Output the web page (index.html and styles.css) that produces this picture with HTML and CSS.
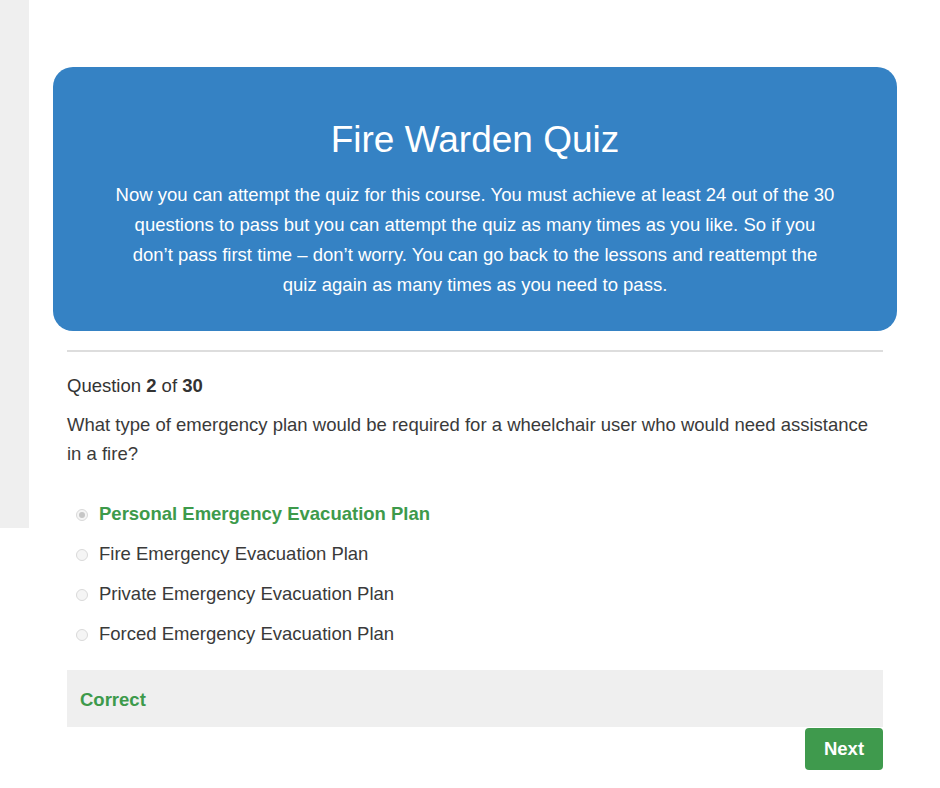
FILE: index.html
```html
<!DOCTYPE html>
<html lang="en">
<head>
    <meta charset="UTF-8">
    <meta name="viewport" content="width=device-width, initial-scale=1.0">
    <link rel="stylesheet" href="styles.css">
</head>
<body>
    <div class="page">
        <aside class="sidebar"></aside>

        <main class="main">
            <div class="banner">
                <h1>Fire Warden Quiz</h1>
                <p>Now you can attempt the quiz for this course. You must achieve at least 24 out of the 30 questions to pass but you can attempt the quiz as many times as you like. So if you don’t pass first time – don’t worry. You can go back to the lessons and reattempt the quiz again as many times as you need to pass.</p>
            </div>

            <div class="quiz">
                <hr class="divider">
                <div class="counter">Question <b>2</b> of <b>30</b></div>
                <p class="question">What type of emergency plan would be required for a wheelchair user who would need assistance in a fire?</p>

                <ul class="answers">
                    <li class="answer right">
                        <input type="radio" name="q2" id="a1" checked disabled>
                        <label for="a1">Personal Emergency Evacuation Plan</label>
                    </li>
                    <li class="answer">
                        <input type="radio" name="q2" id="a2" disabled>
                        <label for="a2">Fire Emergency Evacuation Plan</label>
                    </li>
                    <li class="answer">
                        <input type="radio" name="q2" id="a3" disabled>
                        <label for="a3">Private Emergency Evacuation Plan</label>
                    </li>
                    <li class="answer">
                        <input type="radio" name="q2" id="a4" disabled>
                        <label for="a4">Forced Emergency Evacuation Plan</label>
                    </li>
                </ul>

                <div class="feedback">Correct</div>
                <div class="actions">
                    <button class="next">Next</button>
                </div>
            </div>
        </main>
    </div>
</body>
</html>
```

FILE: styles.css
```css
body {
    margin: 0;
    font-family: "Liberation Sans", Arial, sans-serif;
    color: #333;
    background: #fff;
}

.page {
    display: flex;
    align-items: flex-start;
}

.sidebar {
    width: 29px;
    height: 528px;
    background-color: #efefef;
    flex-shrink: 0;
}

.main {
    width: 844px;
    margin-left: 24px;
    padding-top: 67px;
}

.banner {
    background-color: rgb(53, 130, 196);
    color: #fff;
    border-radius: 20px;
    height: 264px;
    box-sizing: border-box;
    padding: 53px 61px 0;
    text-align: center;
}

.banner h1 {
    margin: 0 0 20px;
    font-size: 37px;
    line-height: 40px;
    font-weight: normal;
}

.banner p {
    margin: 0;
    font-size: 18.5px;
    line-height: 30px;
}

.quiz {
    padding: 0 14px;
}

.divider {
    border: 0;
    height: 2px;
    background-color: #ddd;
    margin: 19px 0 20px;
}

.counter {
    font-size: 18.5px;
    line-height: 28px;
}

.question {
    font-size: 18.5px;
    line-height: 29px;
    margin: 10px 0 0;
    color: #3a3a3a;
}

.answers {
    list-style: none;
    margin: 26px 0 0;
    padding: 0;
}

.answer {
    display: flex;
    align-items: center;
    height: 40px;
    font-size: 18.5px;
    color: #3a3a3a;
}

.answer input {
    appearance: none;
    -webkit-appearance: none;
    width: 12px;
    height: 12px;
    margin: 1px 11px 0 9px;
    border: 1px solid #d9d9d9;
    border-radius: 50%;
    background-color: #f5f5f5;
    box-sizing: border-box;
    position: relative;
}

.answer input:checked::after {
    content: "";
    position: absolute;
    left: 2px;
    top: 2px;
    width: 6px;
    height: 6px;
    border-radius: 50%;
    background-color: #c6c6c6;
}

.answer.right label {
    color: #3d9a4b;
    font-weight: bold;
}

.feedback {
    margin-top: 16px;
    height: 57px;
    box-sizing: border-box;
    padding: 2px 13px 0;
    display: flex;
    align-items: center;
    background-color: #efefef;
    color: #3d9a4b;
    font-size: 18.5px;
    font-weight: bold;
}

.actions {
    display: flex;
    justify-content: flex-end;
    margin-top: 1px;
}

.next {
    width: 78px;
    height: 42px;
    border: 0;
    border-radius: 4px;
    background-color: #3f9a4d;
    color: #fff;
    font-family: inherit;
    font-size: 18.5px;
    font-weight: bold;
}
```
